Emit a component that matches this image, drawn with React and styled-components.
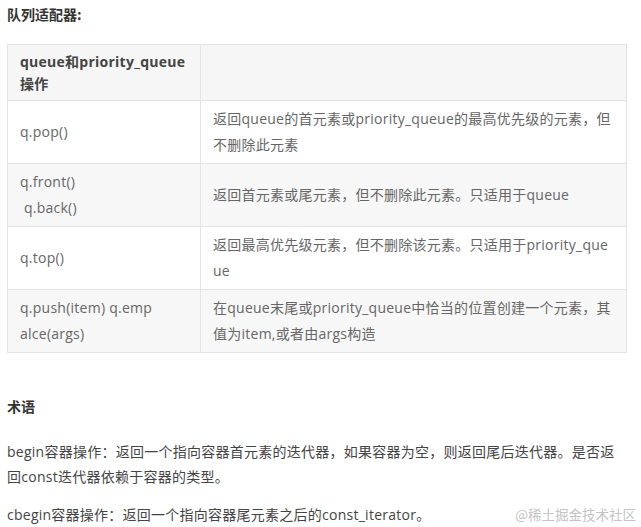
import React from 'react';
import styled, { createGlobalStyle } from 'styled-components';

const GlobalStyle = createGlobalStyle`
  html, body {
    margin: 0;
    padding: 0;
    background: #fff;
  }
  body {
    font-family: "Open Sans", "Noto Sans CJK SC", sans-serif;
    color: #444;
  }
`;

const Page = styled.div`
  width: 641px;
  height: 527px;
  overflow: hidden;
  position: relative;
  padding: 0 7px;
  box-sizing: border-box;
`;

const Heading = styled.h3`
  margin: 0;
  padding-top: ${props => props.top}px;
  font-size: 14px;
  line-height: 22px;
  font-weight: 700;
  color: #333;
  font-family: "Noto Sans CJK SC", sans-serif;
`;

const Table = styled.table`
  margin-top: 19px;
  width: 620px;
  border-collapse: collapse;
  table-layout: fixed;
  border: 1px solid #e1e1e1;
  font-size: 14px;
  letter-spacing: 0.25px;
  color: #666;
  th, td {
    border: 1px solid #e4e4e4;
    vertical-align: middle;
    text-align: left;
    white-space: pre-wrap;
  }
  th {
    background: #f6f6f6;
    font-weight: 700;
    color: #444;
    line-height: 22px;
    height: 55px;
    padding: 0 12px;
  }
  td {
    line-height: 26px;
    height: 62px;
    padding: 0 14px 0 12px;
  }
  tbody tr:nth-child(even) td {
    background: #f7f7f7;
  }
`;

const DescCell = styled.td`
  word-break: break-all;
`;

const Para = styled.p`
  margin: ${props => props.top}px 0 0;
  max-width: 617px;
  font-size: 14px;
  letter-spacing: 0.25px;
  line-height: 25px;
  color: #444;
`;

const Watermark = styled.span`
  position: absolute;
  right: 5px;
  bottom: 3px;
  font-size: 13.5px;
  color: #c4c4c4;
  font-family: "Noto Sans CJK SC", sans-serif;
`;

const rows = [
  { op: 'q.pop()', desc: '返回queue的首元素或priority_queue的最高优先级的元素，但不删除此元素' },
  { op: 'q.front()\n q.back()', desc: '返回首元素或尾元素，但不删除此元素。只适用于queue' },
  { op: 'q.top()', desc: '返回最高优先级元素，但不删除该元素。只适用于priority_queue' },
  { op: 'q.push(item) q.emp alce(args)', desc: '在queue末尾或priority_queue中恰当的位置创建一个元素，其值为item,或者由args构造' },
];

export default function App() {
  return (
    <Page>
      <GlobalStyle />
      <Heading top={3}>队列适配器:</Heading>
      <Table>
        <colgroup>
          <col style={{ width: 193 }} />
          <col />
        </colgroup>
        <thead>
          <tr>
            <th>queue和priority_queue操作</th>
            <th></th>
          </tr>
        </thead>
        <tbody>
          {rows.map(row => (
            <tr key={row.op}>
              <td>{row.op}</td>
              <DescCell>{row.desc}</DescCell>
            </tr>
          ))}
        </tbody>
      </Table>
      <Heading top={42}>术语</Heading>
      <Para top={22}>begin容器操作：返回一个指向容器首元素的迭代器，如果容器为空，则返回尾后迭代器。是否返回const迭代器依赖于容器的类型。</Para>
      <Para top={13}>cbegin容器操作：返回一个指向容器尾元素之后的const_iterator。</Para>
      <Watermark>@稀土掘金技术社区</Watermark>
    </Page>
  );
}
